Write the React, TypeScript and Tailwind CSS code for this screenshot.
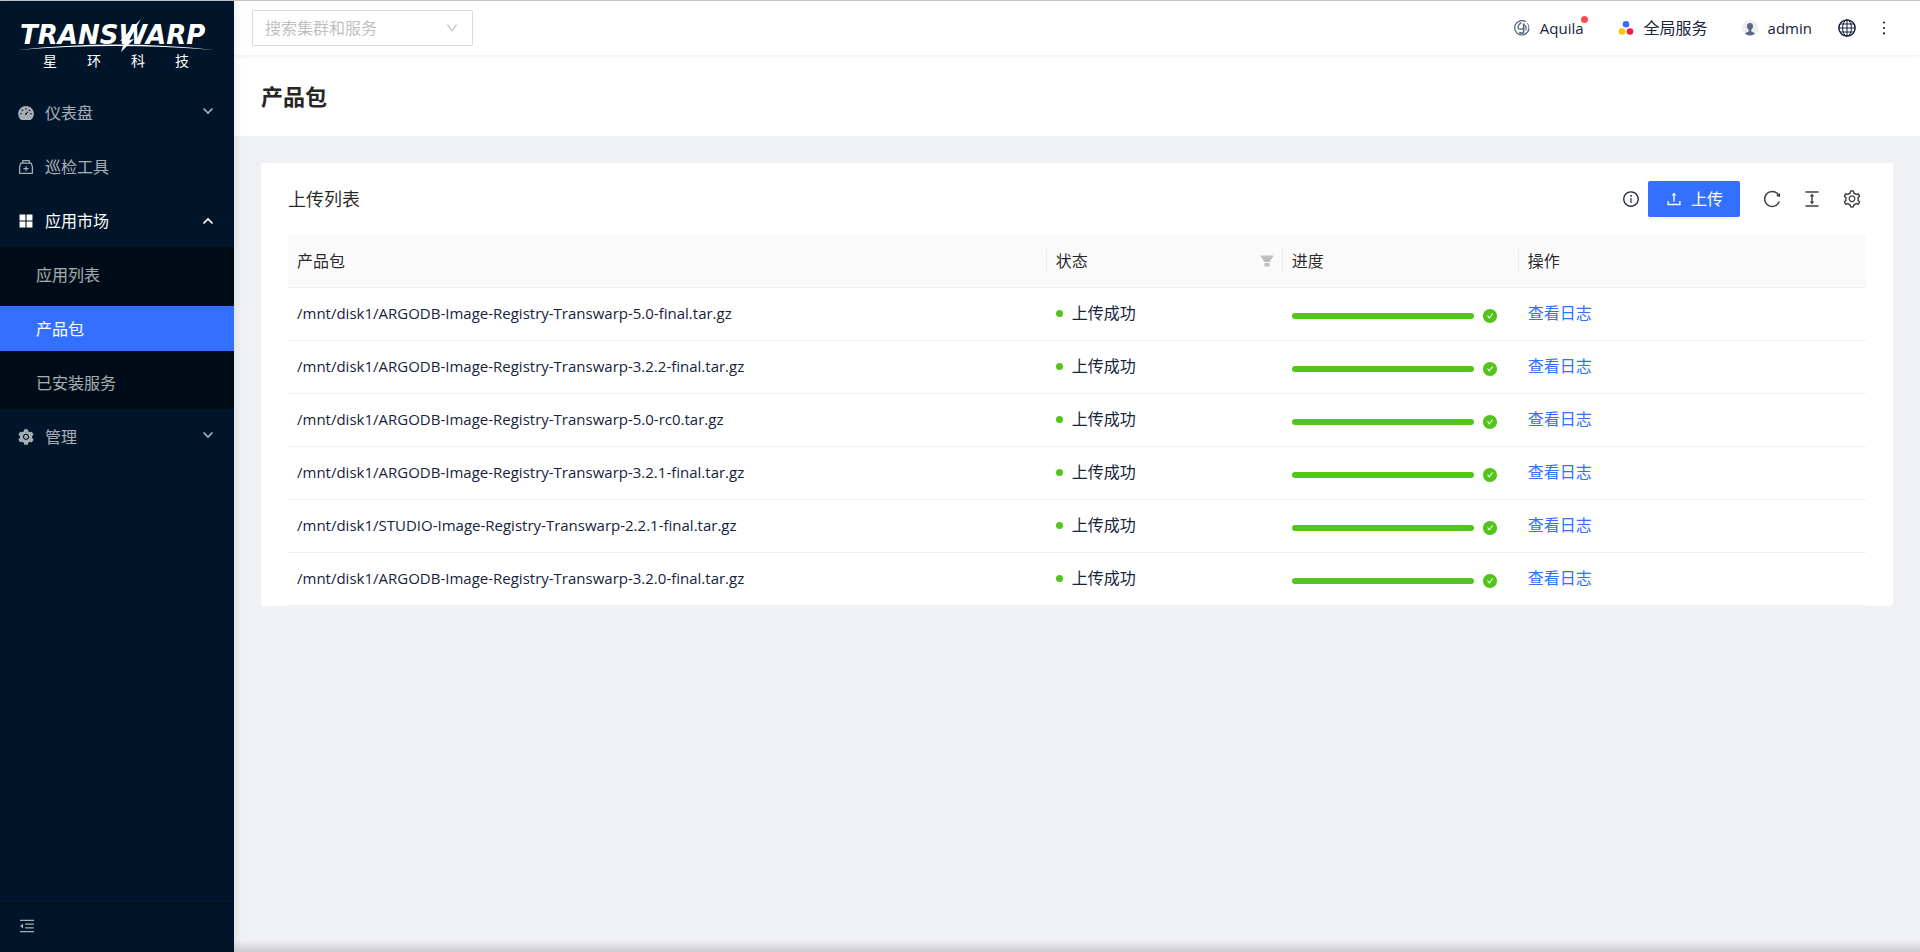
import {
  AiFillAppstore,
  AiFillCheckCircle,
  AiFillDashboard,
  AiFillFilter,
  AiFillSetting,
  AiOutlineColumnHeight,
  AiOutlineDown,
  AiOutlineInfoCircle,
  AiOutlineMedicineBox,
  AiOutlineMenuFold,
  AiOutlineMore,
  AiOutlineReload,
  AiOutlineSetting,
  AiOutlineUpload,
} from "react-icons/ai";
import { useState } from "react";
import type { ReactNode } from "react";

const packages = [
  "/mnt/disk1/ARGODB-Image-Registry-Transwarp-5.0-final.tar.gz",
  "/mnt/disk1/ARGODB-Image-Registry-Transwarp-3.2.2-final.tar.gz",
  "/mnt/disk1/ARGODB-Image-Registry-Transwarp-5.0-rc0.tar.gz",
  "/mnt/disk1/ARGODB-Image-Registry-Transwarp-3.2.1-final.tar.gz",
  "/mnt/disk1/STUDIO-Image-Registry-Transwarp-2.2.1-final.tar.gz",
  "/mnt/disk1/ARGODB-Image-Registry-Transwarp-3.2.0-final.tar.gz",
];

const marketItems = ["应用列表", "产品包", "已安装服务"];

function Logo() {
  return (
    <div className="mx-[18px] pt-[18px] text-white">
      <svg viewBox="0 0 198 33" className="block h-[33px] w-[198px]" role="img" aria-label="TRANSWARP">
        <text x="2" y="25" fill="#fff" fontSize="26" fontWeight="700" fontStyle="italic" fontFamily="DejaVu Sans, sans-serif">
          TRANSWARP
        </text>
        <path d="M0 31Q98 20 196 31Q98 23 0 31Z" fill="#fff" />
        <path d="M123 0L111 21L116 20L103 33L107 21L102 22Z" fill="#fff" />
      </svg>
      <div className="ml-[25px] mr-[27px] flex justify-between text-sm leading-[18px]">
        <span>星</span>
        <span>环</span>
        <span>科</span>
        <span>技</span>
      </div>
    </div>
  );
}

function Chevron({ up }: { up?: boolean }) {
  return (
    <svg viewBox="0 0 12 8" className={`ml-auto h-2 w-3 ${up ? "" : "mb-1"}`} fill="none" stroke="currentColor" strokeWidth="1.7">
      <path d={up ? "M1.5 6.5L6 2L10.5 6.5" : "M1.5 1.5L6 6L10.5 1.5"} />
    </svg>
  );
}

function MenuButton({ icon, label, arrow, active, onClick }: { icon: ReactNode; label: string; arrow?: "up" | "down"; active?: boolean; onClick?: () => void }) {
  return (
    <button
      type="button"
      onClick={onClick}
      className={`flex h-[45px] w-full items-center gap-2.5 pl-[17px] pr-5 text-left ${active ? "text-white" : "text-white/65"}`}
    >
      {icon}
      <span>{label}</span>
      {arrow ? <Chevron up={arrow === "up"} /> : null}
    </button>
  );
}

function Sidebar() {
  const [open, setOpen] = useState(true);

  return (
    <aside className="z-10 flex w-[234px] shrink-0 flex-col bg-[#001529] shadow-[2px_0_8px_rgba(29,35,41,0.08)]">
      <Logo />
      <nav className="mt-5 flex flex-col gap-[9px]">
        <MenuButton icon={<AiFillDashboard className="h-[18px] w-[18px]" />} label="仪表盘" arrow="down" />
        <MenuButton icon={<AiOutlineMedicineBox className="h-[18px] w-[18px]" />} label="巡检工具" />
        <div>
          <MenuButton icon={<AiFillAppstore className="h-[18px] w-[18px]" />} label="应用市场" arrow={open ? "up" : "down"} active onClick={() => setOpen(!open)} />
          {open ? (
            <ul className="-mb-1 mt-1 flex flex-col gap-[9px] bg-[#000c17] pb-1 pt-[5px]">
              {marketItems.map((item) => (
                <li key={item}>
                  <a href="#" className={`flex h-[45px] items-center pl-9 ${item === "产品包" ? "bg-[#3370ff] text-white" : "text-white/65"}`}>
                    {item}
                  </a>
                </li>
              ))}
            </ul>
          ) : null}
        </div>
        <MenuButton icon={<AiFillSetting className="h-[18px] w-[18px]" />} label="管理" arrow="down" />
      </nav>
      <div className="mt-auto border-t border-[#000c17] text-white/65">
        <button type="button" aria-label="收起菜单" className="flex h-12 w-full items-center pb-1 pl-[18px]">
          <AiOutlineMenuFold className="h-[18px] w-[18px]" />
        </button>
      </div>
    </aside>
  );
}

function AquilaIcon() {
  return (
    <svg viewBox="0 0 16 16" className="h-4 w-4" fill="none" stroke="#5b6783" strokeWidth="1.3">
      <path d="M12 1.8A7.2 7.2 0 1 0 15 9" />
      <path d="M13.2 3.2A7 7 0 0 1 9.5 14.5" strokeWidth="1" />
      <path d="M7.2 2.6C4.6 4.4 3.8 7 4.4 8.8C6.5 9.4 9 9 10.4 8" />
      <path d="M9.6 3.5V12.6C8.2 13.4 6.4 13.2 5.2 12.2" strokeWidth="1.6" />
      <path d="M9.8 5C12 5.4 12.6 7.6 11.8 10.4" />
    </svg>
  );
}

function ServicesIcon() {
  return (
    <svg viewBox="0 0 16 16" className="h-4 w-4">
      <circle cx="8" cy="4.3" r="3.3" fill="#3370ff" />
      <circle cx="4" cy="11.5" r="3.3" fill="#ffc400" />
      <circle cx="12" cy="11.5" r="3.3" fill="#ff1744" />
    </svg>
  );
}

function AvatarIcon() {
  return (
    <svg viewBox="0 0 16 16" className="h-4 w-4">
      <circle cx="8" cy="8" r="8" fill="#ededf0" />
      <path d="M8 3C10 3 11.2 4.4 11 6.6C10.8 8.3 10 9.4 9.2 10V11.2L12.8 13.2Q13 14.6 8 15.6Q3 14.6 3.2 13.2L6.8 11.2V10C6 9.4 5.2 8.3 5 6.6C4.8 4.4 6 3 8 3Z" fill="#5b6783" />
    </svg>
  );
}

function GlobeIcon() {
  return (
    <svg viewBox="0 0 18 18" className="h-[18px] w-[18px]" fill="none" stroke="currentColor" strokeWidth="1">
      <circle cx="9" cy="9" r="8.1" strokeWidth="1.5" />
      <ellipse cx="9" cy="9" rx="4.4" ry="8.1" />
      <path d="M9 1V17M1 9H17M2.2 5H15.8M2.2 13H15.8" />
    </svg>
  );
}

function Header() {
  return (
    <header className="relative flex h-[54px] items-center justify-between bg-white pl-[18px] pr-[26px] shadow-[0_1px_4px_rgba(0,21,41,0.08)]">
      <div className="relative">
        <select
          aria-label="搜索集群和服务"
          defaultValue=""
          className="block h-9 w-[221px] appearance-none rounded-xs border border-[#d9d9d9] bg-white pl-3 pr-8 text-[#bfbfbf]"
        >
          <option value="">搜索集群和服务</option>
        </select>
        <AiOutlineDown className="pointer-events-none absolute right-3.5 top-[11px] h-3.5 w-3.5 text-[#bfbfbf]" />
      </div>
      <div className="flex items-center gap-[34px]">
        <button type="button" className="relative flex items-center gap-2.5 text-[15px]">
          <AquilaIcon />
          Aquila
          <span className="absolute -right-1 -top-px h-[7px] w-[7px] rounded-full bg-[#ff4d4f]" />
        </button>
        <button type="button" className="flex items-center gap-2.5">
          <ServicesIcon />
          全局服务
        </button>
        <button type="button" className="flex items-center gap-2.5 text-[15px]">
          <AvatarIcon />
          admin
        </button>
        <div className="-ml-2 flex items-center gap-[18px]">
          <button type="button" aria-label="语言">
            <GlobeIcon />
          </button>
          <button type="button" aria-label="更多">
            <AiOutlineMore className="h-5 w-5" />
          </button>
        </div>
      </div>
    </header>
  );
}

function UploadCard() {
  return (
    <section className="rounded-xs bg-white px-[27px]">
      <div className="flex items-center justify-between py-[18px]">
        <h2 className="text-lg leading-9 text-black/85">上传列表</h2>
        <div className="flex items-center text-black/75">
          <AiOutlineInfoCircle className="mr-2 h-[18px] w-[18px] text-[#17233d]" />
          <button type="button" className="flex h-9 items-center gap-2 rounded-xs bg-[#3370ff] px-[17px] text-white shadow-[0_2px_0_rgba(0,0,0,0.04)]">
            <AiOutlineUpload className="h-[18px] w-[18px]" />
            上传
          </button>
          <div className="ml-[22px] mr-1 flex gap-5">
            <button type="button" aria-label="刷新">
              <AiOutlineReload className="h-5 w-5" />
            </button>
            <button type="button" aria-label="密度">
              <AiOutlineColumnHeight className="h-5 w-5" />
            </button>
            <button type="button" aria-label="列设置">
              <AiOutlineSetting className="h-5 w-5" />
            </button>
          </div>
        </div>
      </div>
      <table className="w-full table-fixed border-separate border-spacing-0 text-left">
        <colgroup>
          <col />
          <col className="w-[236px]" />
          <col className="w-[236px]" />
          <col className="w-[22%]" />
        </colgroup>
        <thead>
          <tr className="h-[53px] bg-[#fafafa] text-black/85 *:border-b *:border-[#f0f0f0] *:font-normal">
            <th className="rounded-tl-xs p-0">
              <div className="flex h-[25px] items-center border-r border-[#ececec] pl-[9px]">产品包</div>
            </th>
            <th className="p-0">
              <div className="flex h-[25px] items-center justify-between border-r border-[#ececec] pl-[9px] pr-[7px]">
                状态
                <button type="button" aria-label="筛选状态">
                  <AiFillFilter className="h-4 w-4 text-[#bfbfbf]" />
                </button>
              </div>
            </th>
            <th className="p-0">
              <div className="flex h-[25px] items-center border-r border-[#ececec] pl-[9px]">进度</div>
            </th>
            <th className="rounded-tr-xs py-0 pl-[9px]">操作</th>
          </tr>
        </thead>
        <tbody>
          {packages.map((path) => (
            <tr key={path} className="h-[53px] *:border-b *:border-[#f0f0f0] *:px-[9px] *:pb-0.5 *:pt-0">
              <td className="truncate text-[15px]">{path}</td>
              <td>
                <span className="flex items-center gap-[9px]">
                  <i className="h-[7px] w-[7px] rounded-full bg-[#52c41a]" />
                  上传成功
                </span>
              </td>
              <td>
                <div className="flex items-center gap-2 pr-3 pt-1.5">
                  <div role="progressbar" aria-label="上传进度" aria-valuenow={100} className="h-1.5 flex-1 rounded-full bg-[#52c41a]" />
                  <AiFillCheckCircle className="h-4 w-4 text-[#52c41a]" />
                </div>
              </td>
              <td>
                <a href="#" className="text-[#3370ff]">
                  查看日志
                </a>
              </td>
            </tr>
          ))}
        </tbody>
      </table>
    </section>
  );
}

export default function App() {
  return (
    <div className="relative flex min-h-screen border-t border-[#c8c8c8] bg-[#f0f1f5] font-['Open_Sans','Noto_Sans_CJK_SC',sans-serif] text-base text-[#17233d]">
      <Sidebar />
      <div className="min-w-0 flex-1">
        <Header />
        <div className="flex h-[81px] items-center bg-white px-[27px] pt-0.5">
          <h1 className="text-[22px] font-bold text-[#262626]">产品包</h1>
        </div>
        <main className="p-[27px]">
          <UploadCard />
        </main>
      </div>
      <div className="pointer-events-none absolute inset-x-0 bottom-0 z-20 h-3 bg-linear-to-b from-transparent to-black/15" />
    </div>
  );
}
